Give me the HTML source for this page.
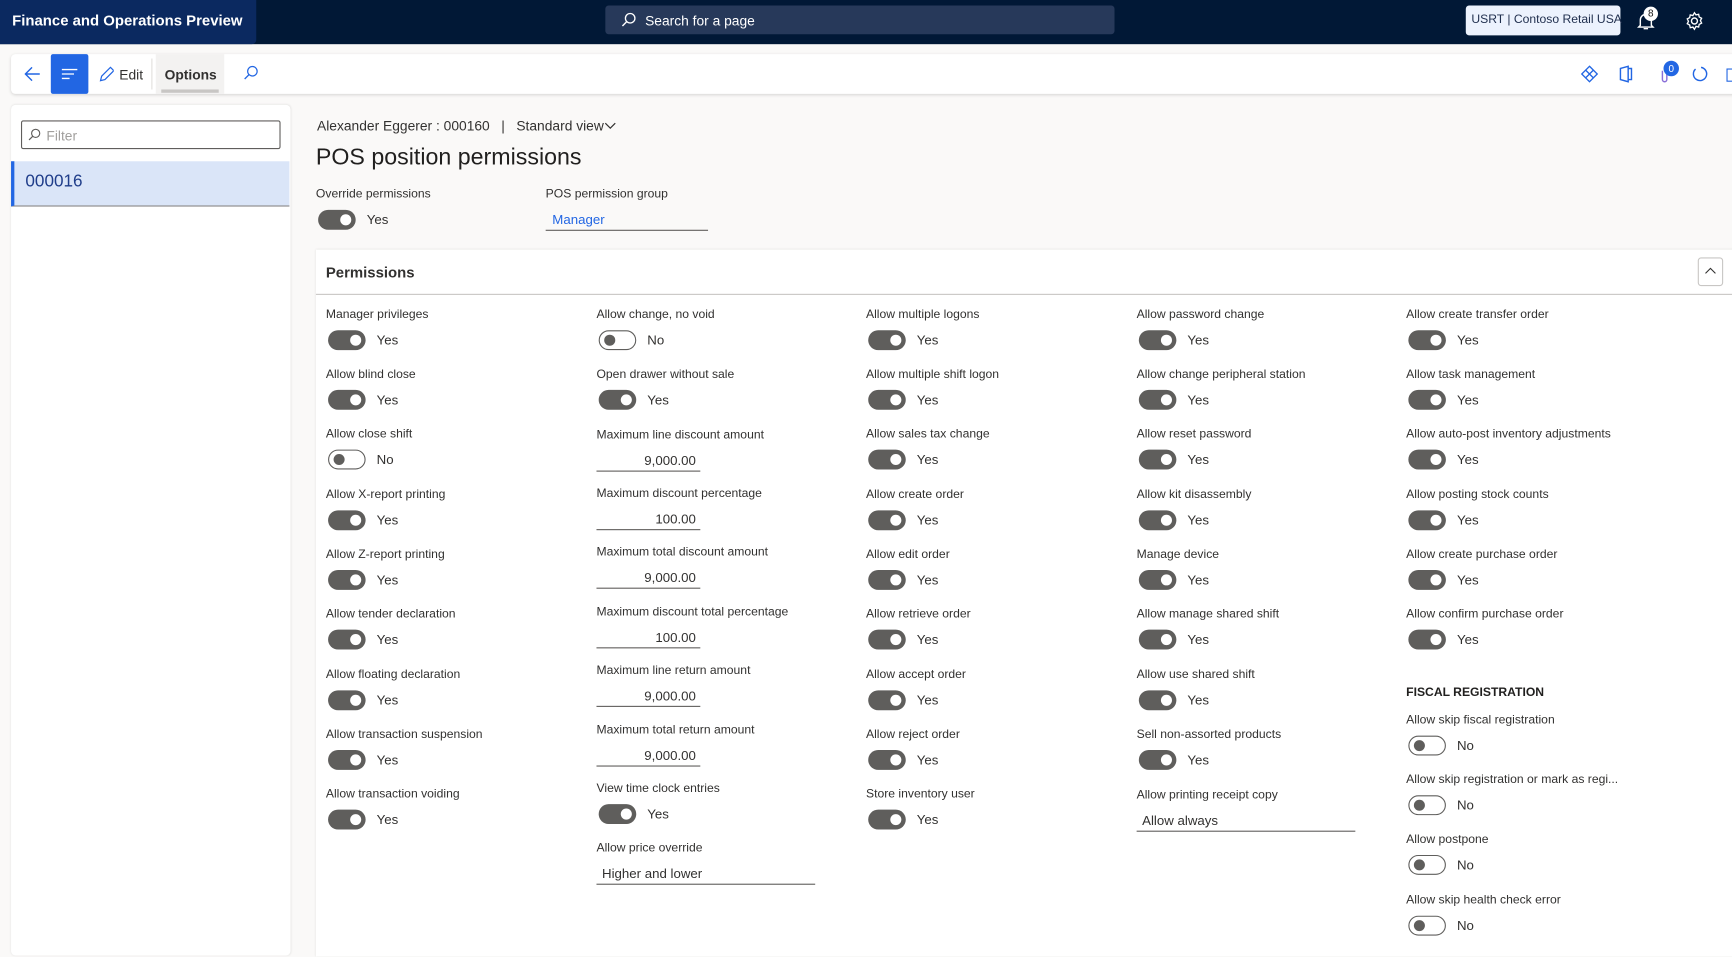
<!DOCTYPE html>
<html><head><meta charset="utf-8"><style>
html,body{margin:0;padding:0;width:1732px;height:943px;overflow:hidden;background:#faf9f8;}
#w{position:absolute;left:0;top:0;width:1568px;height:854px;transform:scale(1.10459);transform-origin:0 0;font-family:"Liberation Sans",sans-serif;color:#323130;}
.a{position:absolute;}
.it{position:absolute;font-size:11px;}
.it .lb{line-height:16px;white-space:nowrap;color:#323130;}
.tg{display:flex;align-items:center;margin-top:6px;height:18px;}
.sw{width:34px;height:18px;border-radius:9px;box-sizing:border-box;position:relative;margin-left:2px;}
.on{background:#5f5e5c;}
.on::after{content:"";position:absolute;right:4px;top:4px;width:10px;height:10px;border-radius:50%;background:#fff;}
.off{background:#fff;border:1px solid #5f5e5c;}
.off::after{content:"";position:absolute;left:4px;top:3px;width:10px;height:10px;border-radius:50%;background:#5f5e5c;}
.tv{margin-left:10px;font-size:12px;color:#323130;}
.fld{margin-top:5px;border-bottom:1px solid #605e5c;height:20px;font-size:12px;line-height:20px;box-sizing:border-box;}
</style></head><body><div id="w">
<div class="a" style="left:0;top:0;width:1568px;height:40px;background:#011836;"></div>
<div class="a" style="left:0;top:0;width:232px;height:40px;background:#0b2960;border-radius:0 0 4px 0;"></div>
<div class="a" style="left:11px;top:11px;font-size:13.5px;font-weight:bold;color:#fff;">Finance and Operations Preview</div>
<div class="a" style="left:548px;top:5px;width:461px;height:26px;background:#27395a;border-radius:3px;"></div>
<svg class="a" style="left:562px;top:11px" width="14" height="14" viewBox="0 0 14 14"><circle cx="8.5" cy="5.5" r="4.3" fill="none" stroke="#fff" stroke-width="1.2"/><path d="M5.5 8.5L1.5 12.5" stroke="#fff" stroke-width="1.3"/></svg>
<div class="a" style="left:584px;top:12px;font-size:12.5px;color:#fff;">Search for a page</div>
<div class="a" style="left:1327px;top:5px;width:140px;height:27px;background:#ecf2fd;border-radius:3px;"></div>
<div class="a" style="left:1332px;top:12px;font-size:11px;color:#1f2e4d;white-space:nowrap;">USRT | Contoso Retail USA</div>
<svg class="a" style="left:1482px;top:10px" width="16" height="18" viewBox="0 0 16 18"><path d="M3 13V8a5 5 0 0 1 10 0v5l1.5 1.5h-13z" fill="none" stroke="#fff" stroke-width="1.3"/><path d="M6 16h4" stroke="#fff" stroke-width="1.3"/></svg>
<div class="a" style="left:1488px;top:6px;width:13px;height:13px;border-radius:50%;background:#fff;color:#111;font-size:9px;text-align:center;line-height:13px;">8</div>
<svg class="a" style="left:1525px;top:10px" width="18" height="18" viewBox="0 0 18 18"><circle cx="9" cy="9" r="2.7" fill="none" stroke="#fff" stroke-width="1.3"/><path d="M9 1.5l1.4 2 2.4-.6.5 2.4 2.2 1.2-1.1 2.2 1.1 2.2-2.2 1.2-.5 2.4-2.4-.6L9 16.5l-1.4-2-2.4.6-.5-2.4-2.2-1.2 1.1-2.2-1.1-2.2 2.2-1.2.5-2.4 2.4.6z" fill="none" stroke="#fff" stroke-width="1.2"/></svg>
<div class="a" style="left:10px;top:49px;width:1570px;height:36px;background:#fff;border-radius:4px;box-shadow:0 1px 3px rgba(0,0,0,.15);"></div>
<svg class="a" style="left:21px;top:59px" width="16" height="16" viewBox="0 0 16 16"><path d="M15 8H2M8 2L2 8l6 6" fill="none" stroke="#2266e3" stroke-width="1.3"/></svg>
<div class="a" style="left:46px;top:49px;width:34px;height:36px;background:#2266e3;border-radius:2px;"></div>
<svg class="a" style="left:55px;top:60px" width="16" height="14" viewBox="0 0 16 14"><path d="M1 3h14M1 7h11M1 11h7" stroke="#fff" stroke-width="1.2"/></svg>
<svg class="a" style="left:89px;top:59px" width="14" height="16" viewBox="0 0 14 16"><path d="M2 14l1-4 8-8 3 3-8 8z" fill="none" stroke="#2266e3" stroke-width="1.1"/></svg>
<div class="a" style="left:108px;top:61px;font-size:12.5px;color:#323130;">Edit</div>
<div class="a" style="left:137px;top:53px;width:1px;height:28px;background:#e1dfdd;"></div>
<div class="a" style="left:141px;top:49px;width:62px;height:36px;background:#f3f2f1;"></div>
<div class="a" style="left:146px;top:81px;width:52px;height:3px;background:#c8c6c4;"></div>
<div class="a" style="left:149px;top:61px;font-size:12.5px;font-weight:bold;color:#323130;">Options</div>
<svg class="a" style="left:220px;top:59px" width="14" height="14" viewBox="0 0 14 14"><circle cx="8.5" cy="5.5" r="4.3" fill="none" stroke="#2266e3" stroke-width="1.1"/><path d="M5.5 8.5L1.5 12.5" stroke="#2266e3" stroke-width="1.2"/></svg>
<svg class="a" style="left:1431px;top:59px" width="16" height="16" viewBox="0 0 16 16"><path d="M8 1l7 7-7 7-7-7z M4.5 4.5l7 7 M11.5 4.5l-7 7" fill="none" stroke="#2266e3" stroke-width="1.2"/></svg>
<svg class="a" style="left:1465px;top:59px" width="14" height="16" viewBox="0 0 14 16"><path d="M2 3l7-2v14l-7-2zM9 3h3v10h-3" fill="none" stroke="#2266e3" stroke-width="1.3"/></svg>
<svg class="a" style="left:1502px;top:60px" width="10" height="16" viewBox="0 0 10 16"><path d="M3 4v8a2 2 0 0 0 4 0V3" fill="none" stroke="#8a6fd8" stroke-width="1.3"/></svg>
<div class="a" style="left:1506px;top:55px;width:14px;height:14px;border-radius:50%;background:#2266e3;color:#fff;font-size:9px;text-align:center;line-height:14px;">0</div>
<svg class="a" style="left:1531px;top:59px" width="16" height="16" viewBox="0 0 16 16"><path d="M4 3.5A6 6 0 1 0 9 2" fill="none" stroke="#2266e3" stroke-width="1.3"/></svg>
<div class="a" style="left:1563px;top:62px;width:6px;height:10px;border:1px solid #2266e3;"></div>
<div class="a" style="left:10px;top:95px;width:253px;height:770px;background:#fff;border-radius:4px;box-shadow:0 0 2px rgba(0,0,0,.1);"></div>
<div class="a" style="left:19px;top:109px;width:235px;height:26px;border:1px solid #605e5c;border-radius:2px;box-sizing:border-box;"></div>
<svg class="a" style="left:25px;top:116px" width="12" height="12" viewBox="0 0 14 14"><circle cx="8.5" cy="5.5" r="4.3" fill="none" stroke="#605e5c" stroke-width="1.2"/><path d="M5.5 8.5L1.5 12.5" stroke="#605e5c" stroke-width="1.3"/></svg>
<div class="a" style="left:42px;top:116px;font-size:12.5px;color:#a19f9d;">Filter</div>
<div class="a" style="left:10px;top:146px;width:252px;height:41px;background:#dae5f8;border-left:3px solid #2266e3;border-bottom:1px solid #8a8886;box-sizing:border-box;"></div>
<div class="a" style="left:23px;top:156px;font-size:15.5px;color:#1f3d8a;">000016</div>
<div class="a" style="left:287px;top:107px;font-size:12.5px;color:#323130;white-space:nowrap;">Alexander Eggerer : 000160 &nbsp;&nbsp;| &nbsp;&nbsp;Standard view</div>
<svg class="a" style="left:547px;top:110px" width="11" height="8" viewBox="0 0 11 8"><path d="M1 1.5l4.5 4.5 4.5-4.5" fill="none" stroke="#323130" stroke-width="1.1"/></svg>
<div class="a" style="left:286px;top:131px;font-size:21px;color:#201f1e;">POS position permissions</div>
<div class="it" style="left:286px;top:168px"><div class="lb">Override permissions</div><div class="tg"><div class="sw on"></div><span class="tv">Yes</span></div></div>
<div class="it" style="left:494px;top:168px"><div class="lb">POS permission group</div><div class="fld" style="width:147px;padding-left:6px;color:#2266e3;">Manager</div></div>
<div class="a" style="left:286px;top:226px;width:1290px;height:640px;background:#fff;box-shadow:0 0 2px rgba(0,0,0,.12);"></div>
<div class="a" style="left:295px;top:239px;font-size:13.5px;font-weight:bold;color:#323130;">Permissions</div>
<div class="a" style="left:1537px;top:233px;width:23px;height:26px;border:1px solid #c8c6c4;border-radius:3px;box-sizing:border-box;"></div>
<svg class="a" style="left:1543px;top:241px" width="11" height="8" viewBox="0 0 11 8"><path d="M1 6.5l4.5-4.5 4.5 4.5" fill="none" stroke="#323130" stroke-width="1"/></svg>
<div class="a" style="left:286px;top:266px;width:1290px;height:1px;background:#c8c6c4;"></div>

<div class="it" style="left:295px;top:277px"><div class="lb">Manager privileges</div><div class="tg"><div class="sw on"></div><span class="tv">Yes</span></div></div>
<div class="it" style="left:295px;top:331px"><div class="lb">Allow blind close</div><div class="tg"><div class="sw on"></div><span class="tv">Yes</span></div></div>
<div class="it" style="left:295px;top:385px"><div class="lb">Allow close shift</div><div class="tg"><div class="sw off"></div><span class="tv">No</span></div></div>
<div class="it" style="left:295px;top:440px"><div class="lb">Allow X-report printing</div><div class="tg"><div class="sw on"></div><span class="tv">Yes</span></div></div>
<div class="it" style="left:295px;top:494px"><div class="lb">Allow Z-report printing</div><div class="tg"><div class="sw on"></div><span class="tv">Yes</span></div></div>
<div class="it" style="left:295px;top:548px"><div class="lb">Allow tender declaration</div><div class="tg"><div class="sw on"></div><span class="tv">Yes</span></div></div>
<div class="it" style="left:295px;top:603px"><div class="lb">Allow floating declaration</div><div class="tg"><div class="sw on"></div><span class="tv">Yes</span></div></div>
<div class="it" style="left:295px;top:657px"><div class="lb">Allow transaction suspension</div><div class="tg"><div class="sw on"></div><span class="tv">Yes</span></div></div>
<div class="it" style="left:295px;top:711px"><div class="lb">Allow transaction voiding</div><div class="tg"><div class="sw on"></div><span class="tv">Yes</span></div></div>
<div class="it" style="left:540px;top:277px"><div class="lb">Allow change, no void</div><div class="tg"><div class="sw off"></div><span class="tv">No</span></div></div>
<div class="it" style="left:540px;top:331px"><div class="lb">Open drawer without sale</div><div class="tg"><div class="sw on"></div><span class="tv">Yes</span></div></div>
<div class="it" style="left:540px;top:386px"><div class="lb">Maximum line discount amount</div><div class="fld" style="width:94px;text-align:right;padding-right:4px;">9,000.00</div></div>
<div class="it" style="left:540px;top:439px"><div class="lb">Maximum discount percentage</div><div class="fld" style="width:94px;text-align:right;padding-right:4px;">100.00</div></div>
<div class="it" style="left:540px;top:492px"><div class="lb">Maximum total discount amount</div><div class="fld" style="width:94px;text-align:right;padding-right:4px;">9,000.00</div></div>
<div class="it" style="left:540px;top:546px"><div class="lb">Maximum discount total percentage</div><div class="fld" style="width:94px;text-align:right;padding-right:4px;">100.00</div></div>
<div class="it" style="left:540px;top:599px"><div class="lb">Maximum line return amount</div><div class="fld" style="width:94px;text-align:right;padding-right:4px;">9,000.00</div></div>
<div class="it" style="left:540px;top:653px"><div class="lb">Maximum total return amount</div><div class="fld" style="width:94px;text-align:right;padding-right:4px;">9,000.00</div></div>
<div class="it" style="left:540px;top:706px"><div class="lb">View time clock entries</div><div class="tg"><div class="sw on"></div><span class="tv">Yes</span></div></div>
<div class="it" style="left:540px;top:760px"><div class="lb">Allow price override</div><div class="fld" style="width:198px;padding-left:5px;">Higher and lower</div></div>
<div class="it" style="left:784px;top:277px"><div class="lb">Allow multiple logons</div><div class="tg"><div class="sw on"></div><span class="tv">Yes</span></div></div>
<div class="it" style="left:784px;top:331px"><div class="lb">Allow multiple shift logon</div><div class="tg"><div class="sw on"></div><span class="tv">Yes</span></div></div>
<div class="it" style="left:784px;top:385px"><div class="lb">Allow sales tax change</div><div class="tg"><div class="sw on"></div><span class="tv">Yes</span></div></div>
<div class="it" style="left:784px;top:440px"><div class="lb">Allow create order</div><div class="tg"><div class="sw on"></div><span class="tv">Yes</span></div></div>
<div class="it" style="left:784px;top:494px"><div class="lb">Allow edit order</div><div class="tg"><div class="sw on"></div><span class="tv">Yes</span></div></div>
<div class="it" style="left:784px;top:548px"><div class="lb">Allow retrieve order</div><div class="tg"><div class="sw on"></div><span class="tv">Yes</span></div></div>
<div class="it" style="left:784px;top:603px"><div class="lb">Allow accept order</div><div class="tg"><div class="sw on"></div><span class="tv">Yes</span></div></div>
<div class="it" style="left:784px;top:657px"><div class="lb">Allow reject order</div><div class="tg"><div class="sw on"></div><span class="tv">Yes</span></div></div>
<div class="it" style="left:784px;top:711px"><div class="lb">Store inventory user</div><div class="tg"><div class="sw on"></div><span class="tv">Yes</span></div></div>
<div class="it" style="left:1029px;top:277px"><div class="lb">Allow password change</div><div class="tg"><div class="sw on"></div><span class="tv">Yes</span></div></div>
<div class="it" style="left:1029px;top:331px"><div class="lb">Allow change peripheral station</div><div class="tg"><div class="sw on"></div><span class="tv">Yes</span></div></div>
<div class="it" style="left:1029px;top:385px"><div class="lb">Allow reset password</div><div class="tg"><div class="sw on"></div><span class="tv">Yes</span></div></div>
<div class="it" style="left:1029px;top:440px"><div class="lb">Allow kit disassembly</div><div class="tg"><div class="sw on"></div><span class="tv">Yes</span></div></div>
<div class="it" style="left:1029px;top:494px"><div class="lb">Manage device</div><div class="tg"><div class="sw on"></div><span class="tv">Yes</span></div></div>
<div class="it" style="left:1029px;top:548px"><div class="lb">Allow manage shared shift</div><div class="tg"><div class="sw on"></div><span class="tv">Yes</span></div></div>
<div class="it" style="left:1029px;top:603px"><div class="lb">Allow use shared shift</div><div class="tg"><div class="sw on"></div><span class="tv">Yes</span></div></div>
<div class="it" style="left:1029px;top:657px"><div class="lb">Sell non-assorted products</div><div class="tg"><div class="sw on"></div><span class="tv">Yes</span></div></div>
<div class="it" style="left:1029px;top:712px"><div class="lb">Allow printing receipt copy</div><div class="fld" style="width:198px;padding-left:5px;">Allow always</div></div>
<div class="it" style="left:1273px;top:277px"><div class="lb">Allow create transfer order</div><div class="tg"><div class="sw on"></div><span class="tv">Yes</span></div></div>
<div class="it" style="left:1273px;top:331px"><div class="lb">Allow task management</div><div class="tg"><div class="sw on"></div><span class="tv">Yes</span></div></div>
<div class="it" style="left:1273px;top:385px"><div class="lb">Allow auto-post inventory adjustments</div><div class="tg"><div class="sw on"></div><span class="tv">Yes</span></div></div>
<div class="it" style="left:1273px;top:440px"><div class="lb">Allow posting stock counts</div><div class="tg"><div class="sw on"></div><span class="tv">Yes</span></div></div>
<div class="it" style="left:1273px;top:494px"><div class="lb">Allow create purchase order</div><div class="tg"><div class="sw on"></div><span class="tv">Yes</span></div></div>
<div class="it" style="left:1273px;top:548px"><div class="lb">Allow confirm purchase order</div><div class="tg"><div class="sw on"></div><span class="tv">Yes</span></div></div>
<div class="a" style="left:1273px;top:621px;font-size:11px;font-weight:bold;color:#201f1e;">FISCAL REGISTRATION</div>
<div class="it" style="left:1273px;top:644px"><div class="lb">Allow skip fiscal registration</div><div class="tg"><div class="sw off"></div><span class="tv">No</span></div></div>
<div class="it" style="left:1273px;top:698px"><div class="lb">Allow skip registration or mark as regi...</div><div class="tg"><div class="sw off"></div><span class="tv">No</span></div></div>
<div class="it" style="left:1273px;top:752px"><div class="lb">Allow postpone</div><div class="tg"><div class="sw off"></div><span class="tv">No</span></div></div>
<div class="it" style="left:1273px;top:807px"><div class="lb">Allow skip health check error</div><div class="tg"><div class="sw off"></div><span class="tv">No</span></div></div>
</div></body></html>
